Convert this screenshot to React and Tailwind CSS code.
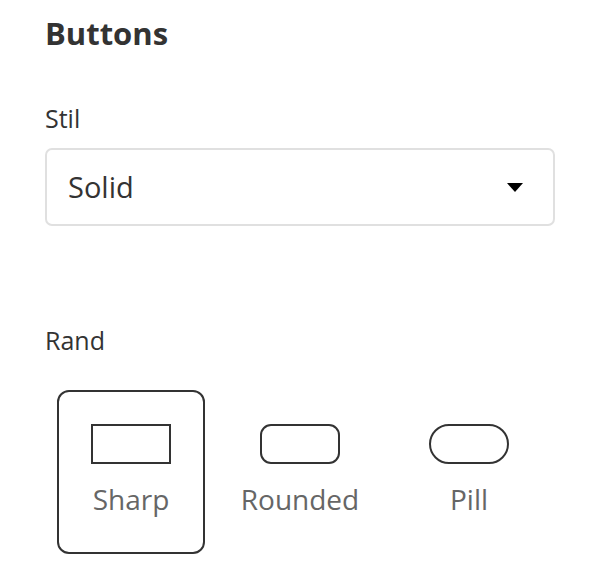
import React, { useState } from 'react';

const options = [
    { id: 'sharp', label: 'Sharp', shape: 'rounded-none' },
    { id: 'rounded', label: 'Rounded', shape: 'rounded-[11px]' },
    { id: 'pill', label: 'Pill', shape: 'rounded-full' },
];

const App = () => {
    const [edge, setEdge] = useState('sharp');

    return (
        <div className="min-h-screen bg-white pl-[45px] pt-[13px] text-[#333]" style={{ fontFamily: '"Open Sans", "Noto Sans", sans-serif' }}>
            <div className="w-[510px]">
                <h2 className="text-[31px] font-bold leading-[40px]">Buttons</h2>

                {/* Stil */}
                <label className="mt-[50px] block text-[25px] leading-[30px]">Stil</label>
                <div className="mt-[15px] flex h-[78px] items-center justify-between rounded-[7px] border-2 border-[#e0e0e0] pl-[21px] pr-[30px]">
                    <span className="text-[29px] leading-[40px]">Solid</span>
                    <svg width="16" height="9" viewBox="0 0 16 9">
                        <path d="M0 0 L16 0 L8 9 Z" fill="#000" />
                    </svg>
                </div>

                {/* Rand */}
                <label className="mt-[99px] block text-[25px] leading-[30px]">Rand</label>
                <div className="mt-[35px] flex gap-[21px] pl-[12px]">
                    {options.map(opt => (
                        <button
                            key={opt.id}
                            onClick={() => setEdge(opt.id)}
                            className={`flex h-[164px] w-[148px] flex-col items-center rounded-[12px] border-2 pt-[32px] ${edge === opt.id ? 'border-[#333]' : 'border-transparent'}`}
                        >
                            <div className={`h-[40px] w-[80px] border-2 border-[#333] ${opt.shape}`} />
                            <span className="mt-[16px] text-[28px] leading-[38px] text-[#666]">{opt.label}</span>
                        </button>
                    ))}
                </div>
            </div>
        </div>
    );
};

export default App;
